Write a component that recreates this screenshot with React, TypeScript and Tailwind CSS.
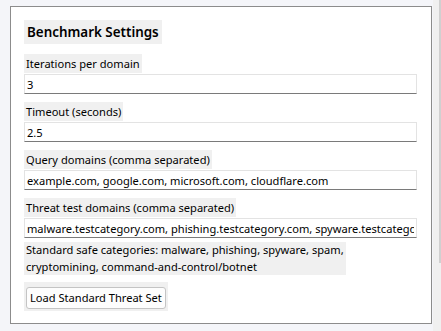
import React from 'react';

const fontStack = { fontFamily: '"Noto Sans", "Open Sans", sans-serif' };

const Field = ({ label, value }: { label: string; value: string }) => (
  <div className="flex flex-col">
    <div className="h-[19px] w-fit bg-[#f0f0f0] px-[2px] text-[11.1px] leading-[19px] text-black">{label}</div>
    <input
      readOnly
      value={value}
      className="mt-[1px] h-[20px] w-full border border-[#e3e3e3] border-b-[#7a7a7a] bg-white px-[2px] text-[11.1px] text-black outline-none"
      style={fontStack}
    />
  </div>
);

export default function App() {
  return (
    <div className="flex h-[331px] w-[441px] bg-[#f4f5f9]" style={fontStack}>
      <div className="flex-1 pl-[10px] pr-[1px] pt-[6px]">
        <div className="flex h-[318px] flex-col border border-[#8c8c8c] bg-white pl-[13px] pr-[14px] pt-[13px]">
          <div className="h-[24px] w-fit bg-[#f0f0f0] px-[3px] text-[13.4px] font-semibold leading-[24px] text-black">
            Benchmark Settings
          </div>
          <div className="mt-[10px] flex flex-col gap-[8px]">
            <Field label="Iterations per domain" value="3" />
            <Field label="Timeout (seconds)" value="2.5" />
            <Field label="Query domains (comma separated)" value="example.com, google.com, microsoft.com, cloudflare.com" />
            <Field
              label="Threat test domains (comma separated)"
              value="malware.testcategory.com, phishing.testcategory.com, spyware.testcategory.com, spam.testcategory.com"
            />
          </div>
          <div className="mt-[4px] w-fit bg-[#f0f0f0] px-[2px] text-[11.1px] leading-[16.5px] text-black">
            Standard safe categories: malware, phishing, spyware, spam,
            <br />
            cryptomining, command-and-control/botnet
          </div>
          <div className="mt-[7px] w-fit bg-[#f0f0f0] p-[2px]">
            <button className="h-[22px] rounded-[3px] border border-[#c4c4c4] bg-[#fdfdfd] px-[3px] text-[11.1px] leading-[20px] text-black">
              Load Standard Threat Set
            </button>
          </div>
        </div>
      </div>
      <div className="flex w-[8px] justify-end bg-[#f0f0f0]">
        <div className="h-[263px] w-[2px] bg-[#d0d0d0]" />
      </div>
    </div>
  );
}
